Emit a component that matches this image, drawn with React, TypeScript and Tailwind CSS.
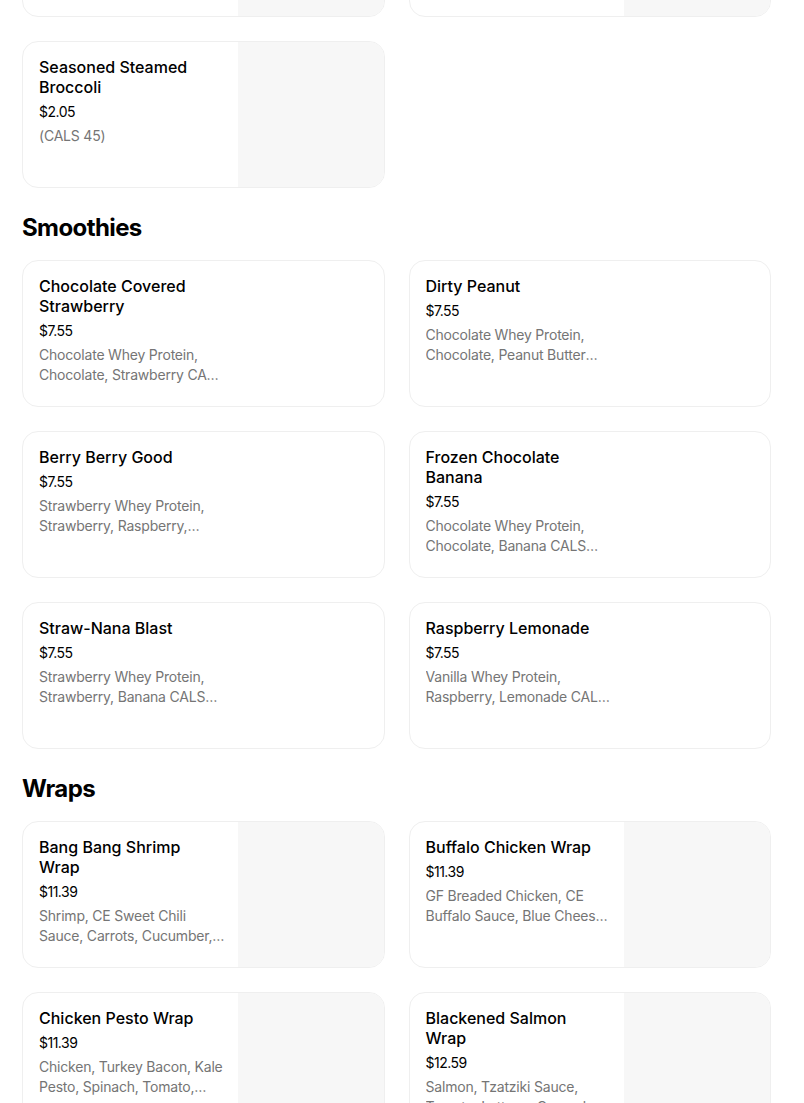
import React from "react";

type Item = { name: string; price: string; desc: string; img?: boolean };

function Card({ item }: { item: Item }) {
  return (
    <div className="flex h-[147px] overflow-hidden rounded-2xl border border-[#efefef] bg-white">
      <div className="flex w-[199px] shrink-0 flex-col pt-[15px] pl-4">
        <div className="text-[16px] font-medium leading-5 text-black">{item.name}</div>
        <div className="mt-[5px] text-[14px] leading-5 tracking-[-0.5px] text-black">{item.price}</div>
        {item.desc && (
          <div className="mt-1 line-clamp-2 w-[187px] text-[14px] leading-5 tracking-[-0.2px] text-[#757575]">
            {item.desc}
          </div>
        )}
      </div>
      <div className="flex-1" />
      {item.img && <div className="w-[146px] shrink-0 bg-[#f7f7f7]" />}
    </div>
  );
}

function Grid({ items }: { items: Item[] }) {
  return (
    <div className="grid grid-cols-2 gap-6">
      {items.map((it, i) => (
        <Card key={i} item={it} />
      ))}
    </div>
  );
}

function Heading({ children }: { children: React.ReactNode }) {
  return (
    <h2 className="mt-6 mb-4 text-[24px] font-bold leading-8 tracking-[-0.6px] text-black">{children}</h2>
  );
}

export default function App() {
  const top: Item[] = [
    { name: "", price: "", desc: "", img: true },
    { name: "", price: "", desc: "", img: true },
  ];
  const sides: Item[] = [
    { name: "Seasoned Steamed Broccoli", price: "$2.05", desc: "(CALS 45)", img: true },
  ];
  const smoothies: Item[] = [
    { name: "Chocolate Covered Strawberry", price: "$7.55", desc: "Chocolate Whey Protein, Chocolate, Strawberry CALS 390" },
    { name: "Dirty Peanut", price: "$7.55", desc: "Chocolate Whey Protein, Chocolate, Peanut Butter CALS 480" },
    { name: "Berry Berry Good", price: "$7.55", desc: "Strawberry Whey Protein, Strawberry, Raspberry, Blueberry CALS 330" },
    { name: "Frozen Chocolate Banana", price: "$7.55", desc: "Chocolate Whey Protein, Chocolate, Banana CALS 400" },
    { name: "Straw-Nana Blast", price: "$7.55", desc: "Strawberry Whey Protein, Strawberry, Banana CALS 350" },
    { name: "Raspberry Lemonade", price: "$7.55", desc: "Vanilla Whey Protein, Raspberry, Lemonade CALS 310" },
  ];
  const wraps: Item[] = [
    { name: "Bang Bang Shrimp Wrap", price: "$11.39", desc: "Shrimp, CE Sweet Chili Sauce, Carrots, Cucumber, Cabbage", img: true },
    { name: "Buffalo Chicken Wrap", price: "$11.39", desc: "GF Breaded Chicken, CE Buffalo Sauce, Blue Cheese, Lettuce", img: true },
    { name: "Chicken Pesto Wrap", price: "$11.39", desc: "Chicken, Turkey Bacon, Kale Pesto, Spinach, Tomato, Mozzarella", img: true },
    { name: "Blackened Salmon Wrap", price: "$12.59", desc: "Salmon, Tzatziki Sauce, Tomato, Lettuce, Cucumber, Red Onion", img: true },
  ];
  return (
    <div
      className="h-[1103px] overflow-hidden bg-white"
      style={{ fontFamily: "Inter, 'Liberation Sans', sans-serif" }}
    >
      <div className="ml-[22px] w-[749px] -mt-[130px]">
        <Grid items={top} />
        <div className="mt-6">
          <Grid items={sides} />
        </div>
        <Heading>Smoothies</Heading>
        <Grid items={smoothies} />
        <Heading>Wraps</Heading>
        <Grid items={wraps} />
      </div>
    </div>
  );
}
